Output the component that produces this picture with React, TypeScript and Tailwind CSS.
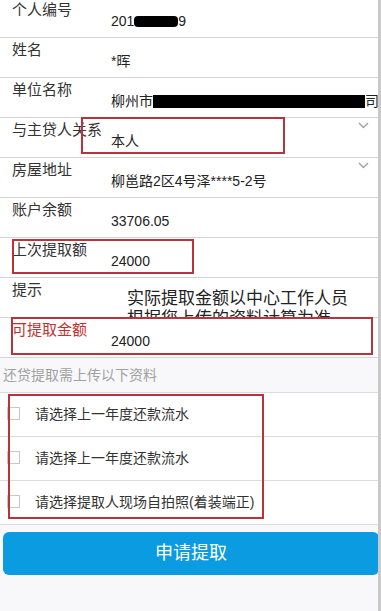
import React from 'react'

const font = { fontFamily: '"Liberation Sans", "Noto Sans CJK SC", sans-serif' }

function Chevron() {
  return (
    <svg width="11" height="7" viewBox="0 0 11 7" className="mt-[4px] mr-[9px] shrink-0">
      <path d="M1 1l4.5 4.5L10 1" fill="none" stroke="#a0a0a0" strokeWidth="1.4" />
    </svg>
  )
}

function Row({ label, children, red, select, h = 'h-10' }: { label: string; children: React.ReactNode; red?: boolean; select?: boolean; h?: string }) {
  return (
    <div className={`flex ${h} border-b border-[#d4d4d4] bg-white overflow-hidden`}>
      <div className={`w-[111px] shrink-0 pl-3 pt-[3px] text-[15px] leading-[18px] ${red ? 'text-[#c0302e]' : 'text-[#333]'}`}>{label}</div>
      <div className="flex-1 pt-[14px] text-[14px] leading-[18px] text-[#222] whitespace-nowrap">{children}</div>
      {select && <Chevron />}
    </div>
  )
}

function FileRow({ text }: { text: string }) {
  return (
    <div className="flex items-start h-[44px] border-b border-[#dcdcdc] bg-white">
      <div className="ml-[7px] mt-[14px] w-[13px] h-[13px] border border-[#c8c8c8] bg-white shrink-0"></div>
      <div className="ml-[15px] mt-[12px] text-[14px] leading-[18px] text-[#333]">{text}</div>
    </div>
  )
}

export default function App() {
  return (
    <div className="relative w-[381px] h-[611px] overflow-hidden bg-[#f8f8fb] flex" style={font}>
      <div className="w-[378px] shrink-0">
        <div className="-mt-[2px]">
          {/* basic info */}
          <Row label="个人编号">
            201<span className="inline-block align-[-1px] w-[44px] h-[11px] bg-black rounded-sm"></span>9
          </Row>
          <Row label="姓名">*晖</Row>
          <Row label="单位名称">
            柳州市<span className="inline-block align-[-2px] w-[212px] h-[13px] bg-black"></span>司
          </Row>
          <Row label="与主贷人关系" select>本人</Row>
          <Row label="房屋地址" select>柳邕路2区4号泽****5-2号</Row>
          <Row label="账户余额">33706.05</Row>
          <Row label="上次提取额">24000</Row>
          <div className="flex h-10 border-b border-[#d4d4d4] bg-white overflow-hidden">
            <div className="w-[127px] shrink-0 pl-3 pt-[3px] text-[15px] leading-[18px] text-[#333]">提示</div>
            <div className="w-[224px] pt-[11px] text-[17px] leading-[20px] text-[#222]">
              实际提取金额以中心工作人员根据您上传的资料计算为准
            </div>
          </div>
          <Row label="可提取金额" red>24000</Row>
        </div>

        {/* upload section */}
        <div className="h-[35px] pl-[3px] pt-[8px] text-[14px] leading-[18px] text-[#a0a0a0] border-b border-[#dcdcdc]">还贷提取需上传以下资料</div>
        <FileRow text="请选择上一年度还款流水" />
        <FileRow text="请选择上一年度还款流水" />
        <FileRow text="请选择提取人现场自拍照(着装端正)" />

        <button className="mt-[7px] ml-[3px] w-[376px] h-[43px] rounded-md bg-[#0a9be0] text-white text-[18px]">申请提取</button>
      </div>
      <div className="w-[3px] bg-[#c9c9c9]"></div>

      {/* annotation boxes */}
      <div className="absolute left-[81px] top-[117px] w-[204px] h-[37px] border-2 border-[#b8333b]"></div>
      <div className="absolute left-[12px] top-[239px] w-[182px] h-[35px] border-2 border-[#b8333b]"></div>
      <div className="absolute left-[11px] top-[317px] w-[362px] h-[38px] border-2 border-[#b8333b]"></div>
      <div className="absolute left-[8px] top-[394px] w-[256px] h-[125px] border-2 border-[#b8333b]"></div>
    </div>
  )
}
